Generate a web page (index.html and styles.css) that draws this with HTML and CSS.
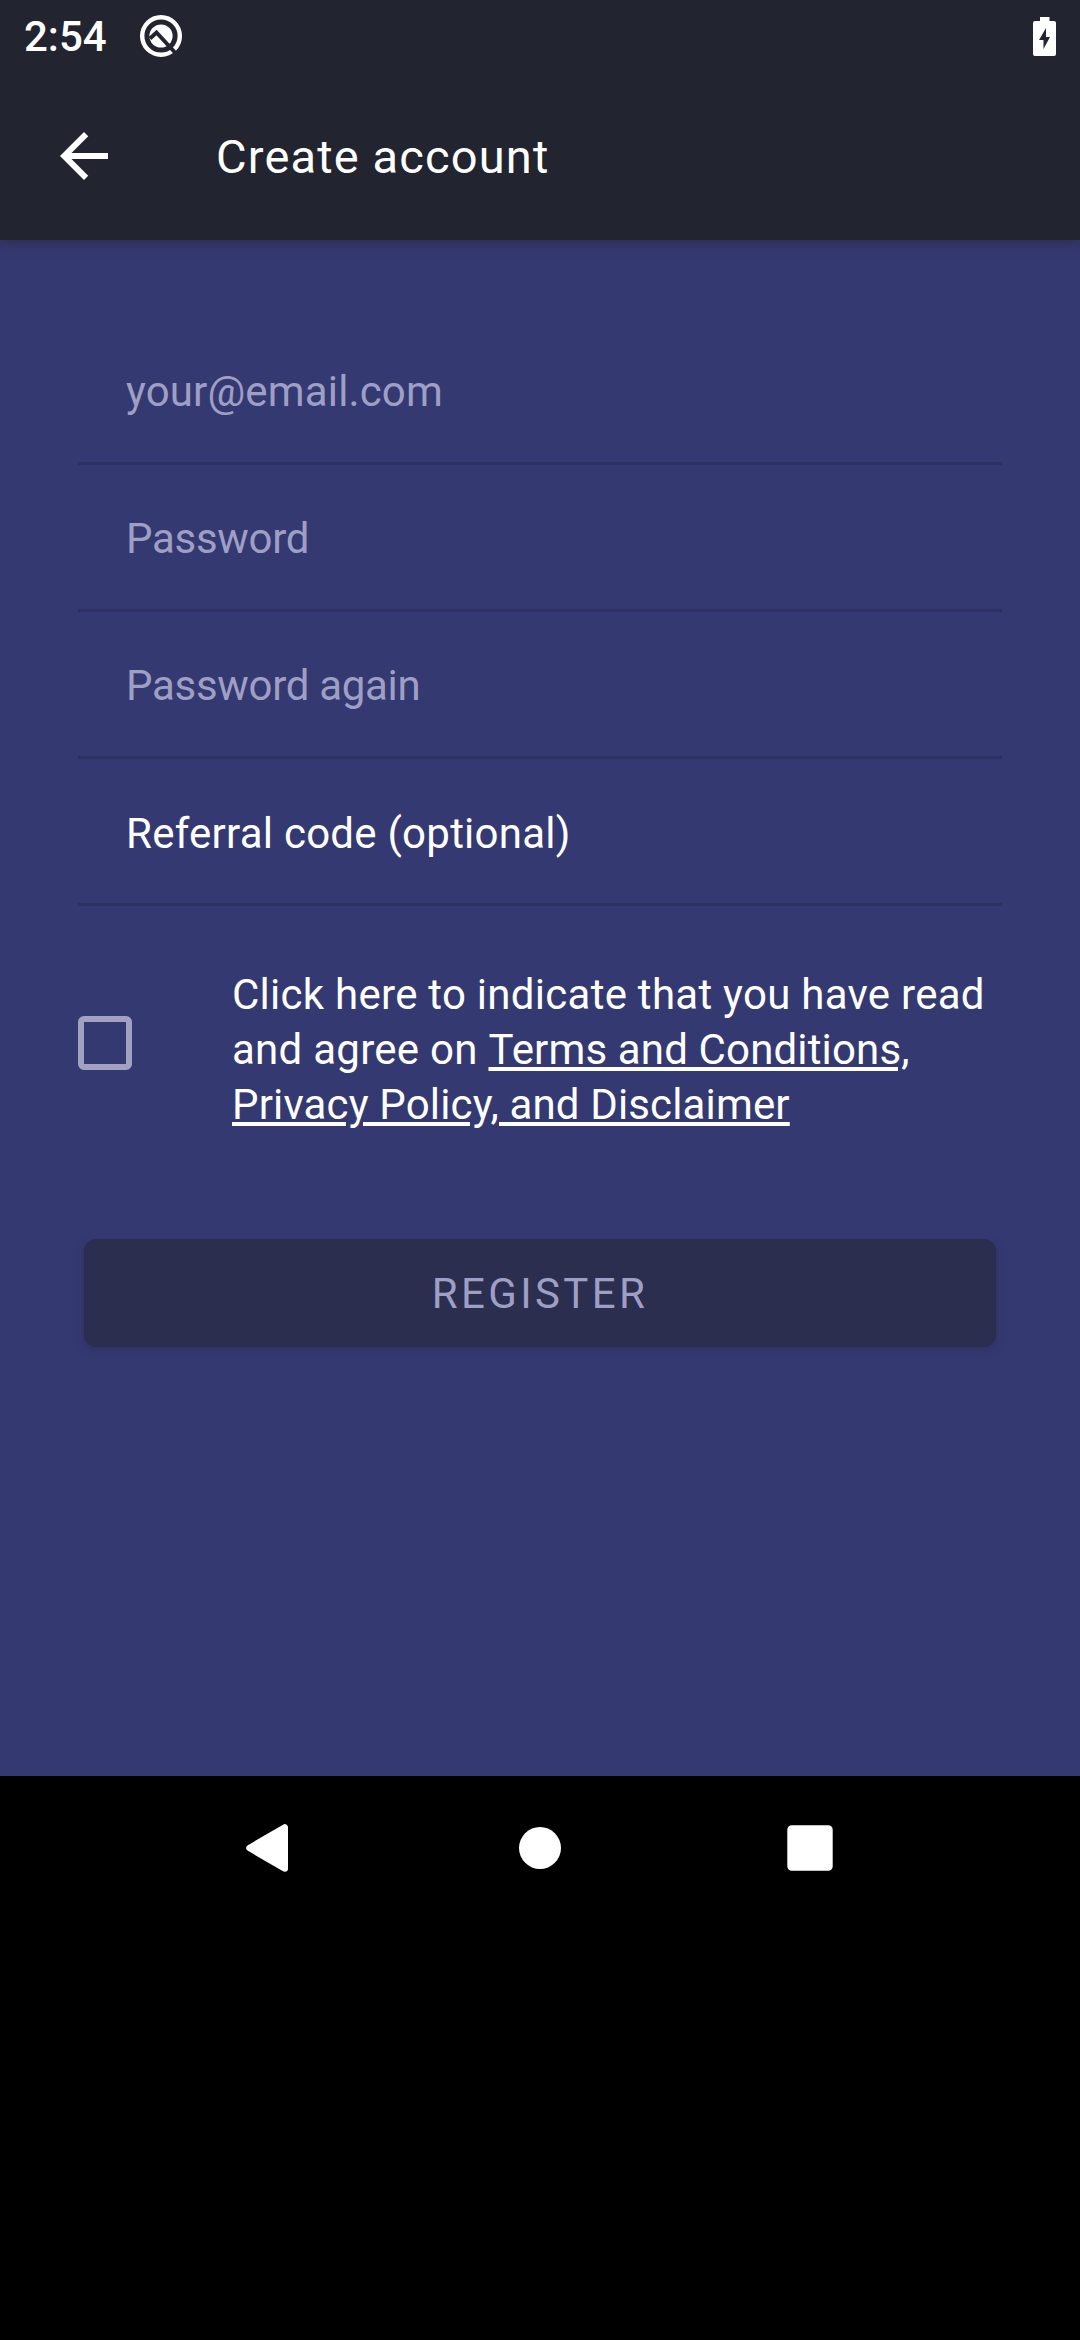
FILE: index.html
```html
<!DOCTYPE html>
<html lang="en">
<head>
<meta charset="utf-8">
<title>Create account</title>
<link rel="stylesheet" href="styles.css">
</head>
<body>
<header class="top">
  <div class="status">
    <span class="clock">2:54</span>
    <svg class="notice" width="44" height="44" viewBox="0 0 44 44">
      <circle cx="22" cy="22" r="18.8" fill="none" stroke="#fff" stroke-width="4.4"/>
      <circle cx="22" cy="22" r="11.6" fill="#fff"/>
      <path d="M11 24.5L17.5 18.5L36 38.5" fill="none" stroke="#22242f" stroke-width="4"/>
    </svg>
    <svg class="battery" width="23" height="39" viewBox="0 0 23 39">
      <path d="M7 0H16.5V4H21Q23 4 23 6V37Q23 39 21 39H2Q0 39 0 37V6Q0 4 2 4H7Z" fill="#fff"/>
      <path d="M13 11L6 23H10.5V32L17 20H13Z" fill="#22242f"/>
    </svg>
  </div>
  <div class="appbar">
    <svg width="72" height="72" viewBox="0 0 24 24"><path d="M20 11H7.83l5.59-5.59L12 4l-8 8 8 8 1.41-1.41L7.83 13H20v-2z" fill="#fff"/></svg>
    <h1 class="title">Create account</h1>
  </div>
</header>
<main class="form">
  <div class="field">your@email.com</div>
  <div class="field password">Password</div>
  <div class="field password">Password again</div>
  <div class="field filled">Referral code (optional)</div>
  <div class="consent">
    <span class="checkbox"></span>
    <p class="terms">Click here to indicate that you have read<br>and agree on <a class="link">Terms and Conditions,<br>Privacy Policy, and Disclaimer</a></p>
  </div>
  <button class="register" disabled>REGISTER</button>
</main>
<nav class="nav">
  <svg width="48" height="48" viewBox="0 0 48 48"><path d="M38.7 3.5V44.5L3.6 24Z" fill="#fff" stroke="#fff" stroke-width="6.6" stroke-linejoin="round"/></svg>
  <svg width="48" height="48" viewBox="0 0 48 48"><circle cx="24" cy="24" r="21" fill="#fff"/></svg>
  <svg width="48" height="48" viewBox="0 0 48 48"><rect x="1.3" y="1.3" width="45.4" height="45.4" rx="4.5" fill="#fff"/></svg>
</nav>
</body>
</html>
```
FILE: styles.css
```css
* { box-sizing: border-box; }

body {
  margin: 0;
  min-height: 2340px;
  background: #000;
  color: #fff;
  font: 42px/48px Roboto, sans-serif;
}

.top {
  position: relative;
  height: 240px;
  background: #22242f;
  box-shadow: 0 2px 12px rgba(34, 36, 47, .6);
}

.status {
  display: flex;
  align-items: center;
  height: 72px;
  padding: 0 24px;
}

.clock {
  width: 115px;
  padding-top: 2px;
  font-weight: 500;
}

.battery { margin-left: auto; }

.appbar {
  display: flex;
  align-items: center;
  gap: 96px;
  height: 168px;
  padding: 0 48px;
}

.title {
  margin: 0;
  padding-top: 2px;
  font-size: 47px;
  font-weight: 400;
  letter-spacing: 1.15px;
}

.form {
  height: 1536px;
  padding: 78px 78px 0;
  background: #353972;
}

.field {
  height: 147px;
  padding: 50px 48px 0;
  border-bottom: 3px solid #2d3061;
  color: #9e9fc4;
  letter-spacing: .15px;
}

.password { letter-spacing: -.3px; }

.filled {
  padding-top: 51px;
  color: #fff;
  letter-spacing: .25px;
}

.consent {
  display: flex;
  align-items: center;
  gap: 100px;
  height: 274px;
}

.checkbox {
  width: 54px;
  height: 54px;
  border: 6px solid #a1a2c2;
  border-radius: 6px;
}

.terms {
  margin: 13px 0 0;
  line-height: 55px;
  letter-spacing: .27px;
  white-space: nowrap;
}

.link {
  letter-spacing: .15px;
  text-decoration: underline;
  text-decoration-thickness: 4px;
  text-underline-offset: 3px;
}

.register {
  display: block;
  width: 912px;
  height: 108px;
  margin: 59px 6px 0;
  padding: 2px 0 0;
  border: 0;
  border-radius: 12px;
  background: #2c2e50;
  box-shadow: 0 3px 7px rgba(44, 46, 80, .55);
  color: #9e9fc4;
  font: inherit;
  letter-spacing: 3.4px;
}

.nav {
  display: flex;
  justify-content: center;
  gap: 222px;
  padding-top: 48px;
}
```
